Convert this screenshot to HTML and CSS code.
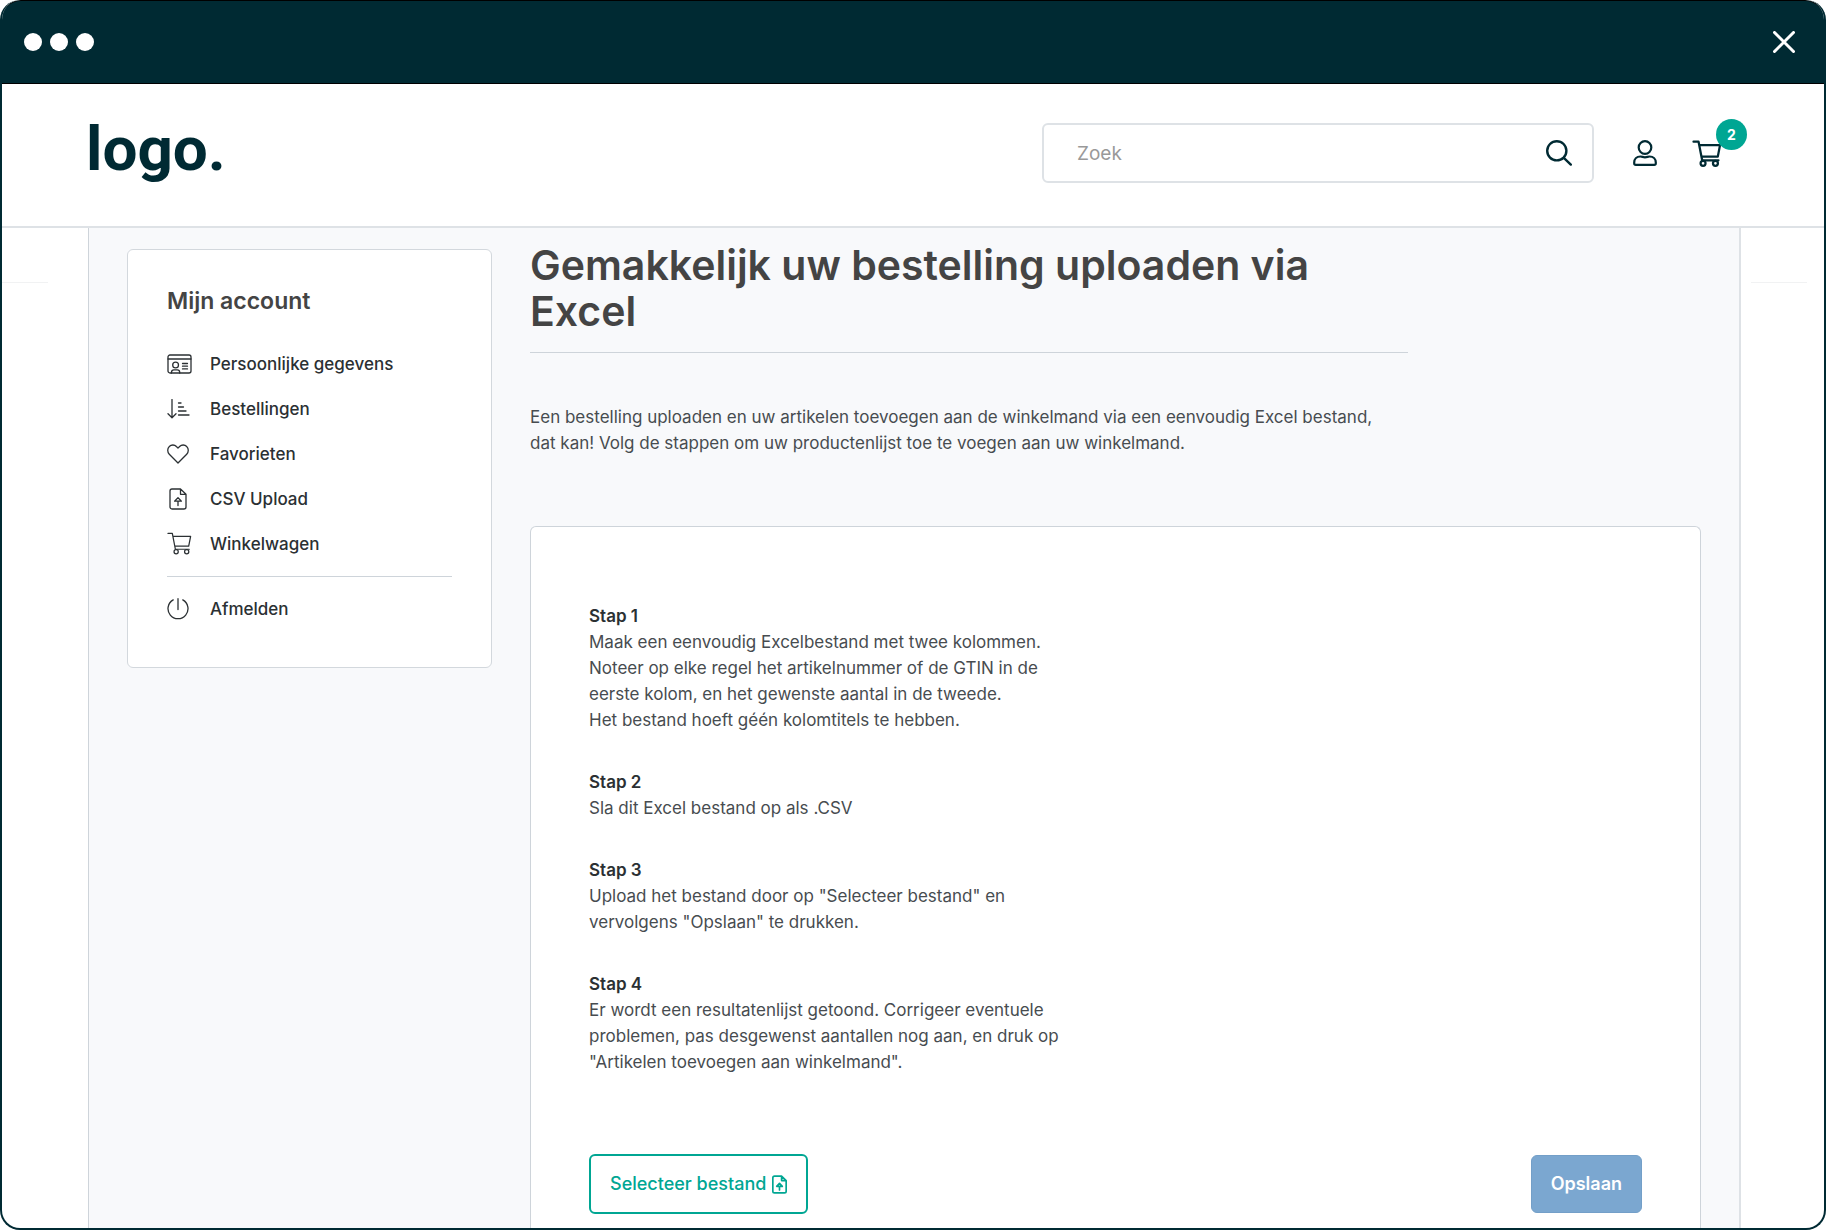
FILE: index.html
```html
<!DOCTYPE html>
<html lang="nl">
<head>
<meta charset="utf-8">
<meta name="viewport" content="width=device-width, initial-scale=1">
<title>Excel bestelling uploaden</title>
<link rel="stylesheet" href="styles.css">
</head>
<body>
<svg class="sprite" aria-hidden="true">
  <symbol id="icon-cart" viewBox="0 0 26 24">
    <path d="M1 1.500h4.500l3.200 16.500M6.200 4.500h18.400l-2 10.300H8.200M8.700 18h14.500"/>
    <circle cx="9.500" cy="20.700" r="2.200"/><circle cx="20.500" cy="20.700" r="2.200"/>
  </symbol>
  <symbol id="icon-file" viewBox="0 0 18 22">
    <path d="M3 1h8.500L17 6.300V19a2 2 0 0 1-2 2H3a2 2 0 0 1-2-2V3a2 2 0 0 1 2-2zM11.500 1v5.300H17"/>
    <path d="M9 17.500v-4.300M5.600 13.200L9 9.600l3.400 3.600z"/>
  </symbol>
</svg>
<div class="window">
  <div class="titlebar">
    <div class="dots"><span class="dot"></span><span class="dot"></span><span class="dot"></span></div>
    <button class="close" type="button" aria-label="Sluiten">
      <svg viewBox="0 0 22 22" width="22" height="22"><path d="M1.500 1.500l19 19M20.500 1.500l-19 19"/></svg>
    </button>
  </div>
  <header class="header">
    <a class="logo" href="#">logo.</a>
    <form class="search" role="search">
      <input class="search-input" type="search" placeholder="Zoek" aria-label="Zoek">
      <button class="icon-button" type="submit" aria-label="Zoeken">
        <svg viewBox="0 0 26 26" width="26" height="26"><circle cx="10.800" cy="10.800" r="9.600"/><path d="M17.800 17.800l7 6.800"/></svg>
      </button>
    </form>
    <nav class="tools" aria-label="Account en winkelwagen">
      <a class="tool" href="#" aria-label="Account">
        <svg viewBox="0 0 24 26" width="24" height="26"><circle cx="12" cy="7.500" r="6.300"/><path d="M7.500 16.500c-4 0-6.300 2.600-6.300 6v.7c0 .9.700 1.600 1.600 1.600h18.400c.9 0 1.600-.7 1.600-1.600v-.7c0-3.400-2.300-6-6.300-6-1.500 0-2.500.8-4.500.8s-3-.8-4.500-.8z"/></svg>
      </a>
      <a class="tool tool-cart" href="#" aria-label="Winkelwagen">
        <svg width="30" height="27"><use href="#icon-cart"/></svg>
        <span class="badge">2</span>
      </a>
    </nav>
  </header>
  <div class="page">
    <div class="gutter gutter-left"></div>
    <div class="content">
      <aside class="account">
        <h2 class="account-title">Mijn account</h2>
        <ul class="menu">
          <li><a class="menu-link" href="#"><svg viewBox="0 0 25 20" width="25" height="20"><rect x="1" y="1" width="23" height="18" rx="2"/><path d="M1 5h23M15.500 9.500h5M15.500 12.200h5M15.500 14.900h5M4.500 19v-.8c0-1.400 1-2.400 2.400-2.400h3.400c1.400 0 2.400 1 2.400 2.400v.8"/><circle cx="8.600" cy="11" r="2.900"/></svg>Persoonlijke gegevens</a></li>
          <li><a class="menu-link" href="#"><svg viewBox="0 0 25 20" width="25" height="20"><path d="M5 .5v18M1 14.700l4 4 4-4M11.500 4h2.500M11.500 8h5M11.500 12h7.500M11.500 16h10.500"/></svg>Bestellingen</a></li>
          <li><a class="menu-link" href="#"><svg viewBox="0 0 25 20" width="25" height="20"><path d="M11 19L2.300 10.200C.2 8 .2 4.500 2.300 2.500c2-2 5.200-2 7.100 0L11 4.100l1.600-1.600c2-2 5.200-2 7.100 0 2.100 2 2.100 5.500 0 7.700z"/></svg>Favorieten</a></li>
          <li><a class="menu-link" href="#"><svg width="25" height="22"><use href="#icon-file" x="2" width="18" height="22"/></svg>CSV Upload</a></li>
          <li><a class="menu-link" href="#"><svg width="25" height="23"><use href="#icon-cart"/></svg>Winkelwagen</a></li>
          <li class="menu-last"><a class="menu-link" href="#"><svg viewBox="0 0 25 22" width="25" height="22"><path d="M11 .7v10.800M6.200 1.900a10 10 0 1 0 9.600 0"/></svg>Afmelden</a></li>
        </ul>
      </aside>
      <main class="main">
        <h1 class="title">Gemakkelijk uw bestelling uploaden via<br>Excel</h1>
        <p class="intro">Een bestelling uploaden en uw artikelen toevoegen aan de winkelmand via een eenvoudig Excel bestand,<br>dat kan! Volg de stappen om uw productenlijst toe te voegen aan uw winkelmand.</p>
        <form class="upload">
          <section class="step"><h3>Stap 1</h3><p>Maak een eenvoudig Excelbestand met twee kolommen.<br>Noteer op elke regel het artikelnummer of de GTIN in de<br>eerste kolom, en het gewenste aantal in de tweede.<br>Het bestand hoeft géén kolomtitels te hebben.</p></section>
          <section class="step"><h3>Stap 2</h3><p>Sla dit Excel bestand op als .CSV</p></section>
          <section class="step"><h3>Stap 3</h3><p>Upload het bestand door op "Selecteer bestand" en<br>vervolgens "Opslaan" te drukken.</p></section>
          <section class="step"><h3>Stap 4</h3><p>Er wordt een resultatenlijst getoond. Corrigeer eventuele<br>problemen, pas desgewenst aantallen nog aan, en druk op<br>"Artikelen toevoegen aan winkelmand".</p></section>
          <div class="actions">
            <button class="button button-outline" type="button">Selecteer bestand<svg width="15" height="19"><use href="#icon-file"/></svg></button>
            <button class="button button-save" type="submit">Opslaan</button>
          </div>
        </form>
      </main>
    </div>
    <div class="gutter gutter-right"></div>
  </div>
</div>
</body>
</html>
```
FILE: styles.css
```css
* { box-sizing: border-box; }

body {
  margin: 0;
  background: #fff;
  color: #474c50;
  font: 400 17px/26px Inter, "Open Sans", sans-serif;
}

h1, h2, h3, p, ul { margin: 0; padding: 0; }
ul { list-style: none; }
a { color: inherit; text-decoration: none; }
button { font: inherit; cursor: pointer; }

svg {
  display: block;
  flex: none;
  fill: none;
  stroke: currentColor;
  stroke-linecap: round;
  stroke-linejoin: round;
}

.sprite { position: absolute; width: 0; height: 0; }

.window {
  display: flex;
  flex-direction: column;
  min-height: 100vh;
  border: 2px solid #002a33;
  border-top: 0;
  border-radius: 20px;
  overflow: hidden;
}

.titlebar {
  display: flex;
  align-items: center;
  justify-content: space-between;
  height: 84px;
  margin: 0 -1px;
  padding: 0 30px 0 23px;
  background: #002a33;
  border: 1px solid #000;
  border-width: 1px 0;
  border-radius: 20px 20px 0 0;
}

.dots { display: flex; gap: 8px; }
.dot { width: 18px; height: 18px; border-radius: 50%; background: #fff; }
.close { padding: 0; border: 0; background: none; color: #fff; stroke-width: 3; }

.header {
  display: flex;
  align-items: center;
  height: 144px;
  padding: 0 77px 4px 84px;
  border-bottom: 2px solid #dee2e6;
  color: #002a33;
}

.logo { margin-right: auto; padding-bottom: 8px; font: 700 62px/72px Roboto, sans-serif; }

.search {
  display: flex;
  align-items: center;
  width: 552px;
  height: 60px;
  padding: 0 20px 0 33px;
  border: 2px solid #dee2e6;
  border-radius: 6px;
}

.search-input {
  flex: 1;
  min-width: 0;
  padding: 2px 0 0;
  border: 0;
  outline: 0;
  background: none;
  font: inherit;
  font-size: 19px;
}
.search-input::placeholder { color: #999; opacity: 1; }

.icon-button { padding: 0; border: 0; background: none; color: #002a33; stroke-width: 2.4; }

.tools { display: flex; align-items: center; gap: 35px; margin-left: 39px; stroke-width: 2.2; }
.tool-cart { position: relative; padding-right: 25px; stroke-width: 2; }

.badge {
  position: absolute;
  top: -21px;
  right: 0;
  width: 31px;
  height: 31px;
  border-radius: 50%;
  background: #00a693;
  color: #fff;
  font-size: 14px;
  font-weight: 700;
  line-height: 31px;
  text-align: center;
}

.page { display: flex; flex: 1; }
.gutter { flex: none; width: 86px; padding-top: 54px; }
.gutter-right { width: 83px; padding-left: 10px; }
.gutter::before { content: ""; display: block; width: 46px; height: 1px; background: #f1f2f3; }
.gutter-right::before { width: 56px; }

.content {
  display: flex;
  flex: 1;
  align-items: flex-start;
  gap: 38px;
  padding: 0 38px;
  border-left: 1px solid #ced4da;
  border-right: 2px solid #dee2e6;
  background: #f8f9fb;
}

.account {
  flex: none;
  width: 365px;
  margin-top: 21px;
  padding: 36px 39px;
  border: 1px solid #d3d8dd;
  border-radius: 6px;
  background: #fff;
}

.account-title { margin-bottom: 25px; color: #444; font-size: 23px; font-weight: 600; line-height: 30px; }

.menu { stroke-width: 1.3; }

.menu-link {
  display: flex;
  align-items: center;
  gap: 18px;
  height: 45px;
  color: #2b3033;
  font-weight: 500;
}

.menu-last { margin-top: 10px; padding-top: 9px; border-top: 1px solid #ced4da; }

.main {
  display: flex;
  flex: 1;
  flex-direction: column;
  align-self: stretch;
  min-width: 0;
  padding-top: 14px;
}

.title {
  width: 75%;
  padding-bottom: 18px;
  border-bottom: 1px solid #ced4da;
  color: #444;
  font-size: 41px;
  font-weight: 600;
  line-height: 46px;
  white-space: nowrap;
}

.intro { margin: 51px 0 70px; white-space: nowrap; }

.upload {
  flex: 1;
  padding: 76px 58px 14px;
  border: 1px solid #ced4da;
  border-bottom: 0;
  border-radius: 6px 6px 0 0;
  background: #fff;
}

.step { margin-bottom: 36px; }
.step h3 { color: #2b3033; font-size: 17px; font-weight: 600; line-height: 26px; }

.actions { display: flex; align-items: center; justify-content: space-between; margin-top: 79px; }

.button {
  display: flex;
  align-items: center;
  gap: 6px;
  height: 60px;
  padding: 0 19px;
  border: 2px solid #00a693;
  border-radius: 6px;
  background: #fff;
  color: #00a693;
  font-size: 18px;
  font-weight: 500;
  stroke-width: 2;
}

.button-save { height: 58px; border: 1px solid #739fc8; background: #7ba7d0; color: #fff; font-weight: 600; }
```
